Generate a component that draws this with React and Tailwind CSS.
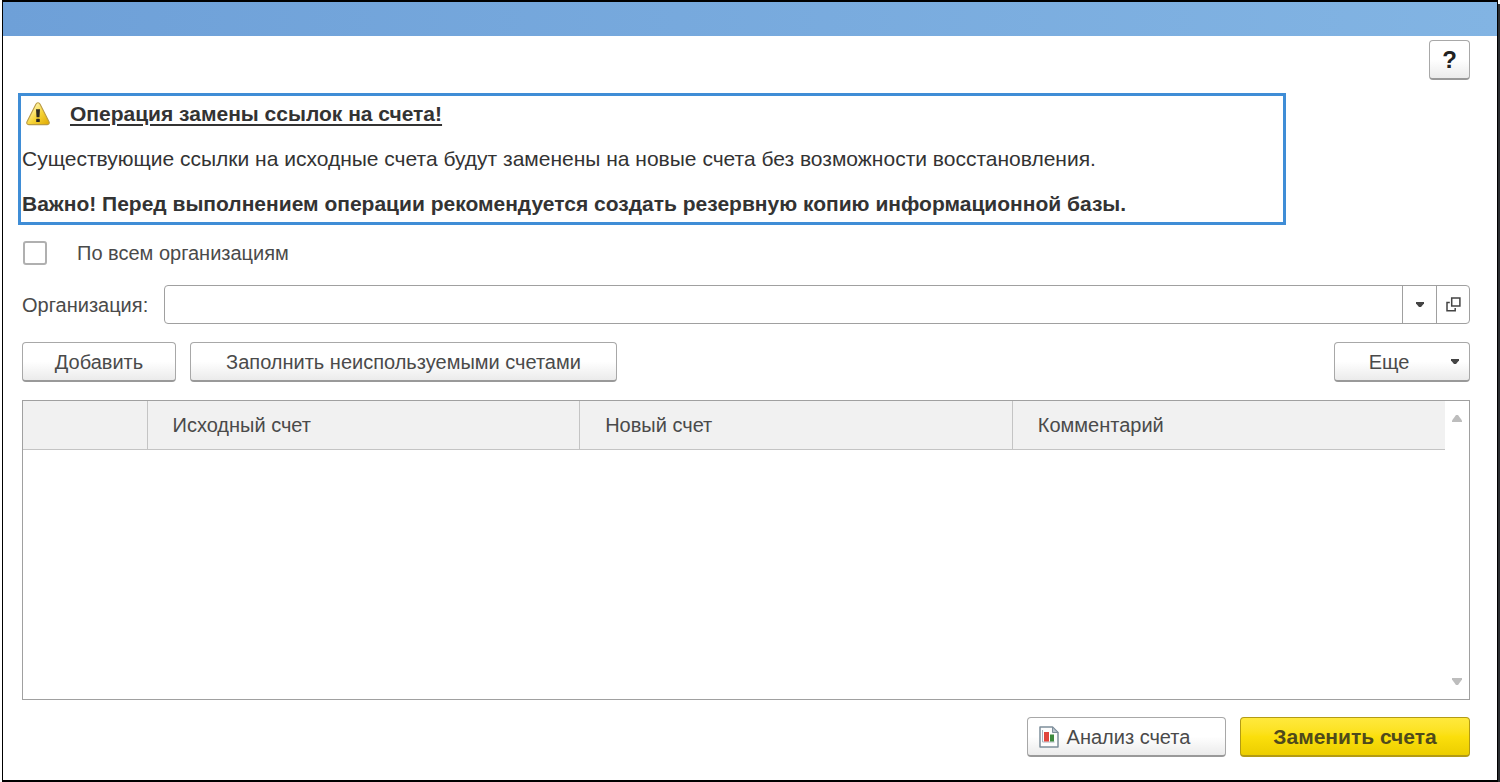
import { clsx } from "clsx";

const COLUMNS = ["Исходный счет", "Новый счет", "Комментарий"];

function Button({ className, children, ...rest }) {
  return (
    <button
      type="button"
      className={clsx(
        "flex h-10 items-center justify-center rounded border border-b-2 border-[#a8a8a8] border-b-[#999] bg-linear-to-b from-white from-50% to-[#ebebeb]",
        className
      )}
      {...rest}
    >
      {children}
    </button>
  );
}

function Triangle({ up = false, className }) {
  return (
    <svg viewBox="0 0 10 7" className={className} fill="currentColor" aria-hidden="true">
      <path d={up ? "M0 7V5.5L4 0H6L10 5.5V7Z" : "M0 0H10V1.5L6 7H4L0 1.5Z"} />
    </svg>
  );
}

function Caret() {
  return (
    <svg viewBox="0 0 8 5" className="h-[5px] w-2" fill="#444" aria-hidden="true">
      <path d="M0 0H8V1.5L5 5H3L0 1.5Z" />
    </svg>
  );
}

function WarningIcon() {
  return (
    <svg viewBox="0 0 24 24" className="size-6 shrink-0" aria-hidden="true">
      <defs>
        <linearGradient id="warn" x1="0" y1="0" x2="1" y2="1">
          <stop offset="0.2" stopColor="#fff6b0" />
          <stop offset="0.55" stopColor="#f6d438" />
          <stop offset="1" stopColor="#dfa800" />
        </linearGradient>
      </defs>
      <path
        d="M12 .8c-.9 0-1.6.5-2.1 1.4L1 19.8c-.7 1.5.1 2.8 1.7 2.8h18.6c1.6 0 2.4-1.3 1.7-2.8L14.1 2.2c-.5-.9-1.2-1.4-2.1-1.4Z"
        fill="url(#warn)"
        stroke="#b99a45"
        strokeWidth="1.1"
      />
      <path d="M10 7.2h4l-.5 8h-3Z" fill="#2b2a22" />
      <rect x="10.2" y="16.8" width="3.6" height="3.2" rx=".6" fill="#2b2a22" />
    </svg>
  );
}

function ReportIcon() {
  return (
    <svg viewBox="0 0 20 22" className="h-[22px] w-5 shrink-0" aria-hidden="true">
      <path d="M1 1h12.5L19 6.5V21H1Z" fill="#fdfdfd" stroke="#7e8e9b" strokeWidth="1.5" strokeLinejoin="round" />
      <path d="M13.5 1v5.5H19Z" fill="#b9c5cf" stroke="#7e8e9b" />
      <path d="M3.5 4v12h12" fill="none" stroke="#a7b4bf" strokeWidth="1" />
      <rect x="5" y="6" width="5" height="9.5" fill="#e0443b" />
      <rect x="11" y="8.5" width="4" height="7" fill="#3d8a3d" />
    </svg>
  );
}

function OpenIcon() {
  return (
    <svg viewBox="0 0 15 15" className="size-[15px]" fill="none" stroke="#444" strokeWidth="1.5" aria-hidden="true">
      <path d="M5.7 .9h8.2v8.2H5.7Z" />
      <path d="M3.8 5.4H1v8.4h8.2V11" />
    </svg>
  );
}

function Warning() {
  return (
    <section className="-ml-1 mr-[184px] mt-[13px] border-3 border-[#3f8dd6] px-px text-[21px] text-[#333]">
      <div className="flex h-9 items-center gap-5 pl-1">
        <WarningIcon />
        <h1 className="font-bold underline decoration-2 underline-offset-3">Операция замены ссылок на счета!</h1>
      </div>
      <p className="pt-3 pb-4 leading-[30px]">
        Существующие ссылки на исходные счета будут заменены на новые счета без возможности восстановления.
      </p>
      <p className="pb-1 leading-7 font-bold">
        Важно! Перед выполнением операции рекомендуется создать резервную копию информационной базы.
      </p>
    </section>
  );
}

function AccountsTable() {
  return (
    <div className="mt-[18px] flex flex-1 border border-[#a0a0a0]">
      <div className="flex-1">
        <table className="w-full table-fixed border-collapse">
          <thead>
            <tr className="h-12 border-b border-[#c4c4c4] bg-[#f1f1f1] text-left">
              <th className="w-[124px] border-r border-[#c4c4c4]" aria-label="Номер"></th>
              {COLUMNS.map((name) => (
                <th key={name} className="border-r border-[#c4c4c4] px-[25px] font-normal last:border-r-0">
                  {name}
                </th>
              ))}
            </tr>
          </thead>
          <tbody></tbody>
        </table>
      </div>
      <div className="flex w-6 flex-col items-center justify-between py-[14px] text-[#bdbdbd]">
        <Triangle up className="h-[7px] w-[10px]" />
        <Triangle className="h-[7px] w-[10px]" />
      </div>
    </div>
  );
}

export default function App() {
  return (
    <div className="flex min-h-screen flex-col overflow-hidden bg-white pr-[2px] pl-[2px] font-['Liberation_Sans',Arial,sans-serif] text-[20px] text-[#4a4a4a]">
      <div className="flex flex-1 flex-col border border-t-2 border-b-2 border-black shadow-[2px_4px_0_#2a2d30]">
        <header className="h-[34px] bg-linear-to-r from-[#6ea0d8] to-[#82b4e3]"></header>

        <main className="flex flex-1 flex-col pt-1 pr-[27px] pb-[23px] pl-[19px]">
          <Button className="w-[41px] self-end text-[24px] font-bold text-[#222]" aria-label="Справка">
            ?
          </Button>

          <Warning />

          <label className="mt-4 flex h-6 items-center gap-[30px]">
            <input
              type="checkbox"
              className="ml-px size-6 appearance-none rounded-[3px] border-2 border-[#b0b0b0] bg-white checked:bg-[#3f8dd6]"
            />
            По всем организациям
          </label>

          <div className="mt-5 flex items-center">
            <label htmlFor="organization" className="w-[142px]">
              Организация:
            </label>
            <div className="flex h-[39px] flex-1 rounded border border-[#a0a0a0]">
              <input id="organization" type="text" className="min-w-0 flex-1 bg-transparent px-2 outline-none" />
              <button
                type="button"
                className="flex w-[34px] items-center justify-center border-l border-[#a0a0a0]"
                aria-label="Выбрать из списка"
              >
                <Caret />
              </button>
              <button
                type="button"
                className="flex w-[33px] items-center justify-center border-l border-[#a0a0a0]"
                aria-label="Открыть"
              >
                <OpenIcon />
              </button>
            </div>
          </div>

          <div className="mt-[18px] flex gap-[14px]">
            <Button className="w-[154px]">Добавить</Button>
            <Button className="w-[427px]">Заполнить неиспользуемыми счетами</Button>
            <Button className="ml-auto w-[136px] gap-[42px] pl-6">
              Еще
              <Caret />
            </Button>
          </div>

          <AccountsTable />

          <footer className="mt-[17px] flex justify-end gap-[14px]">
            <Button className="w-[199px] gap-2 pr-6">
              <ReportIcon />
              Анализ счета
            </Button>
            <button
              type="button"
              className="h-10 w-[230px] rounded border border-b-2 border-[#b39b14] bg-linear-to-b from-[#ffe93c] via-[#fbdf0c] to-[#ecce00] text-[21px] font-bold text-[#4f4a1c]"
            >
              Заменить счета
            </button>
          </footer>
        </main>
      </div>
    </div>
  );
}
